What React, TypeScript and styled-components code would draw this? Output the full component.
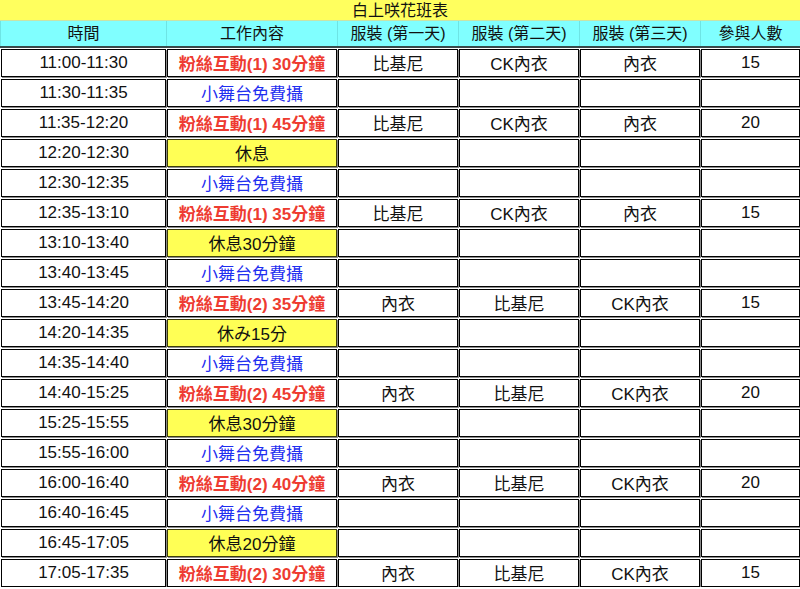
import React from 'react';
import styled, { createGlobalStyle } from 'styled-components';

type Kind = 'fan' | 'stage' | 'rest';

interface Slot {
  time: string;
  task: string;
  kind: Kind;
  outfits?: [string, string, string];
  people?: string;
}

const ORDER_A: [string, string, string] = ['比基尼', 'CK內衣', '內衣'];
const ORDER_B: [string, string, string] = ['內衣', '比基尼', 'CK內衣'];

const SLOTS: Slot[] = [
  { time: '11:00-11:30', task: '粉絲互動(1) 30分鐘', kind: 'fan', outfits: ORDER_A, people: '15' },
  { time: '11:30-11:35', task: '小舞台免費攝', kind: 'stage' },
  { time: '11:35-12:20', task: '粉絲互動(1) 45分鐘', kind: 'fan', outfits: ORDER_A, people: '20' },
  { time: '12:20-12:30', task: '休息', kind: 'rest' },
  { time: '12:30-12:35', task: '小舞台免費攝', kind: 'stage' },
  { time: '12:35-13:10', task: '粉絲互動(1) 35分鐘', kind: 'fan', outfits: ORDER_A, people: '15' },
  { time: '13:10-13:40', task: '休息30分鐘', kind: 'rest' },
  { time: '13:40-13:45', task: '小舞台免費攝', kind: 'stage' },
  { time: '13:45-14:20', task: '粉絲互動(2) 35分鐘', kind: 'fan', outfits: ORDER_B, people: '15' },
  { time: '14:20-14:35', task: '休み15分', kind: 'rest' },
  { time: '14:35-14:40', task: '小舞台免費攝', kind: 'stage' },
  { time: '14:40-15:25', task: '粉絲互動(2) 45分鐘', kind: 'fan', outfits: ORDER_B, people: '20' },
  { time: '15:25-15:55', task: '休息30分鐘', kind: 'rest' },
  { time: '15:55-16:00', task: '小舞台免費攝', kind: 'stage' },
  { time: '16:00-16:40', task: '粉絲互動(2) 40分鐘', kind: 'fan', outfits: ORDER_B, people: '20' },
  { time: '16:40-16:45', task: '小舞台免費攝', kind: 'stage' },
  { time: '16:45-17:05', task: '休息20分鐘', kind: 'rest' },
  { time: '17:05-17:35', task: '粉絲互動(2) 30分鐘', kind: 'fan', outfits: ORDER_B, people: '15' },
];

const HEADINGS = ['時間', '工作內容', '服裝 (第一天)', '服裝 (第二天)', '服裝 (第三天)', '參與人數'];

const COLUMNS = '165px 170px 120px 120px 120px 99px';

const App = (): React.ReactElement => (
  <>
    <GlobalStyle />
    <Sheet>
      <Title>白上咲花班表</Title>
      <HeadRow>
        {HEADINGS.map((h) => (
          <HeadCell key={h}>{h}</HeadCell>
        ))}
      </HeadRow>
      <Body>
        {SLOTS.map((slot) => (
          <React.Fragment key={slot.time}>
            <Cell>{slot.time}</Cell>
            <Cell $kind={slot.kind}>{slot.task}</Cell>
            <Cell>{slot.outfits?.[0]}</Cell>
            <Cell>{slot.outfits?.[1]}</Cell>
            <Cell>{slot.outfits?.[2]}</Cell>
            <Cell>{slot.people}</Cell>
          </React.Fragment>
        ))}
      </Body>
    </Sheet>
  </>
);

export default App;

const GlobalStyle = createGlobalStyle`
  html, body {
    margin: 0;
    padding: 0;
    background: #fff;
  }
  body {
    font-family: "Liberation Sans", "Noto Sans CJK TC", sans-serif;
    color: #111;
  }
`;

const Sheet = styled.div`
  width: 800px;
  overflow: hidden;
`;

const Title = styled.div`
  height: 20px;
  line-height: 21px;
  background: #ffff5e;
  border-bottom: 1px solid #c9e3a8;
  text-align: center;
  font-size: 16px;
`;

const HeadRow = styled.div`
  display: grid;
  grid-template-columns: ${COLUMNS};
  column-gap: 1px;
  padding-left: 1px;
  background: #6ee4e4;
  border-bottom: 2px solid #3a4a4a;
`;

const HeadCell = styled.div`
  height: 25px;
  line-height: 25px;
  background: #80ffff;
  text-align: center;
  font-size: 16px;
`;

const Body = styled.div`
  display: grid;
  grid-template-columns: ${COLUMNS};
  grid-auto-rows: 28px;
  gap: 2px 1px;
  padding: 1px 0 0 1px;
`;

const Cell = styled.div<{ $kind?: Kind }>`
  box-sizing: border-box;
  border: 1px solid ${({ $kind }) => ($kind === 'rest' ? '#3d3d0a' : '#000')};
  box-shadow: 1px 1px 0 #8a8a8a;
  display: flex;
  align-items: center;
  justify-content: center;
  padding-bottom: 1px;
  font-size: 17px;
  white-space: nowrap;
  background: ${({ $kind }) => ($kind === 'rest' ? '#ffff55' : '#fff')};
  color: ${({ $kind }) =>
    $kind === 'fan' ? '#ee3b30' : $kind === 'stage' ? '#1f2ff0' : '#111'};
  font-weight: ${({ $kind }) => ($kind === 'fan' ? 700 : 400)};
`;
